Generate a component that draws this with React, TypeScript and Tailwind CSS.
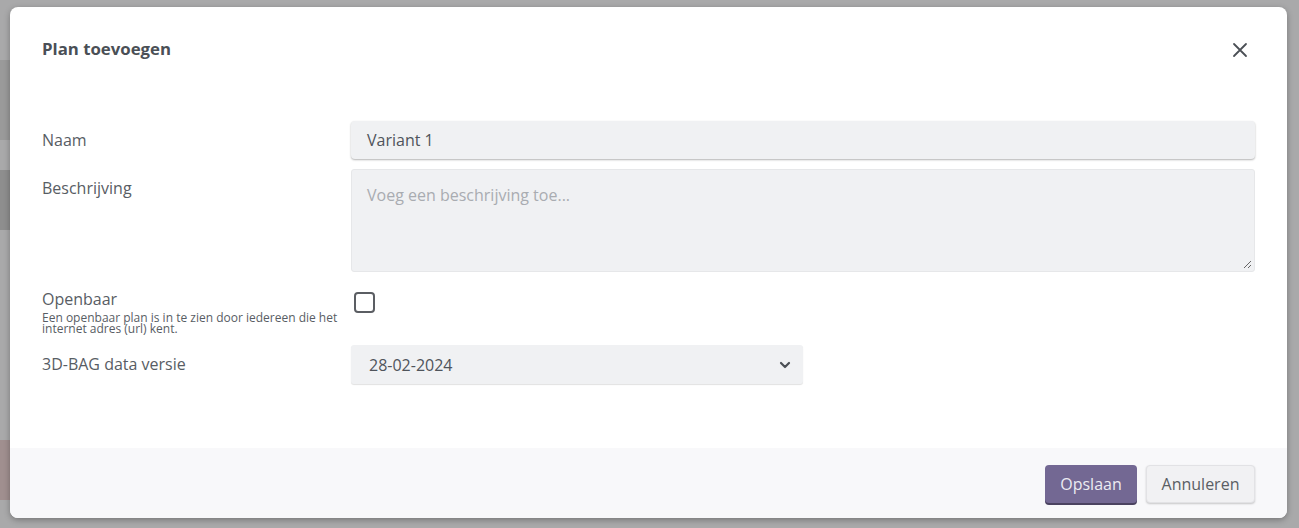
import React from "react";

export default function App() {
  const font = { fontFamily: '"Open Sans", "Noto Sans", sans-serif' };
  return (
    <div
      className="w-[1299px] h-[528px] bg-[#a9a9aa] relative overflow-hidden"
      style={font}
    >
      {/* blurred background hints */}
      <div className="absolute left-0 top-[60px] w-[10px] h-[80px] bg-[#9a9a9a]" />
      <div className="absolute left-0 top-[170px] w-[10px] h-[60px] bg-[#8e8e8e]" />
      <div className="absolute left-0 top-[440px] w-[10px] h-[60px] bg-[#a08f8f]" />

      <div className="absolute left-[10px] top-[7px] w-[1277px] h-[511px] bg-white rounded-[8px] shadow-[0_2px_6px_rgba(0,0,0,0.3)] flex flex-col overflow-hidden">
        {/* header */}
        <div className="flex items-center justify-between pl-[32px] pr-[39px] pt-[31px] h-[53px]">
          <h2 className="text-[16.8px] leading-[22px] font-bold text-[#4a4f56]">Plan toevoegen</h2>
          <button className="w-[16px] h-[16px] mt-[2px] flex items-center justify-center text-[#4b5056]">
            <svg width="16" height="16" viewBox="0 0 16 16" fill="none" stroke="currentColor" strokeWidth="1.8" strokeLinecap="round">
              <path d="M2 2L14 14M14 2L2 14" />
            </svg>
          </button>
        </div>

        {/* body */}
        <div className="flex-1 flex flex-col px-[32px] pt-[61px]">
          <div className="grid grid-cols-[309px_1fr]">
            <div className="pt-[8px] text-[16px] leading-[22px] text-[#585d64]">Naam</div>
            <div className="h-[38px] rounded-[4px] bg-[#f0f1f3] shadow-[0_1px_2px_rgba(0,0,0,0.3)] flex items-center px-[16px] text-[16px] text-[#4f545b]">
              Variant 1
            </div>
          </div>

          <div className="grid grid-cols-[309px_1fr] mt-[10px]">
            <div className="pt-[8px] text-[16px] leading-[22px] text-[#585d64]">Beschrijving</div>
            <div className="relative h-[103px] rounded-[3px] bg-[#f0f1f3] border border-[#e6e7e9] px-[15px] pt-[14px] text-[16px] leading-[22px] text-[#a9acb1]">
              Voeg een beschrijving toe...
              <svg className="absolute right-[2px] bottom-[2px]" width="9" height="9" viewBox="0 0 9 9" stroke="#555" strokeWidth="0.9">
                <path d="M1 8L8 1M5 8L8 5" />
              </svg>
            </div>
          </div>

          <div className="grid grid-cols-[309px_1fr] mt-[17px]">
            <div className="flex flex-col pr-[4px]">
              <div className="text-[16px] leading-[21px] text-[#585d64]">Openbaar</div>
              <div className="mt-[2px] text-[12px] leading-[11px] text-[#585d64]">
                Een openbaar plan is in te zien door iedereen die het internet adres (url) kent.
              </div>
            </div>
            <div className="pt-[3px] pl-[3px]">
              <div className="w-[21px] h-[21px] rounded-[4px] border-2 border-[#5b5e63] bg-white" />
            </div>
          </div>

          <div className="grid grid-cols-[309px_1fr] mt-[11px]">
            <div className="pt-[8px] text-[16px] leading-[22px] text-[#585d64]">3D-BAG data versie</div>
            <div className="w-[452px] h-[39px] rounded-[3px] bg-[#f0f1f3] shadow-[0_1px_1px_rgba(0,0,0,0.12)] flex items-center justify-between pl-[18px] pr-[12px] text-[16px] text-[#4f545b]">
              <span>28-02-2024</span>
              <svg width="12" height="8" viewBox="0 0 12 8" fill="none" stroke="#4b4f55" strokeWidth="2.2" strokeLinecap="round" strokeLinejoin="round">
                <path d="M2 2L6 6L10 2" />
              </svg>
            </div>
          </div>
        </div>

        {/* footer */}
        <div className="h-[70px] bg-[#f8f8fa] flex items-start justify-end gap-[9px] pr-[32px] pt-[17px]">
          <button className="w-[92px] h-[38px] rounded-[4px] bg-[#736893] shadow-[0_2px_0_#4a4260] text-[16px] text-[#ecebf2]">
            Opslaan
          </button>
          <button className="w-[109px] h-[38px] rounded-[4px] bg-[#f1f1f3] border border-[#e2e2e5] shadow-[0_1px_2px_rgba(0,0,0,0.2)] text-[16px] text-[#5a5e64]">
            Annuleren
          </button>
        </div>
      </div>
    </div>
  );
}
